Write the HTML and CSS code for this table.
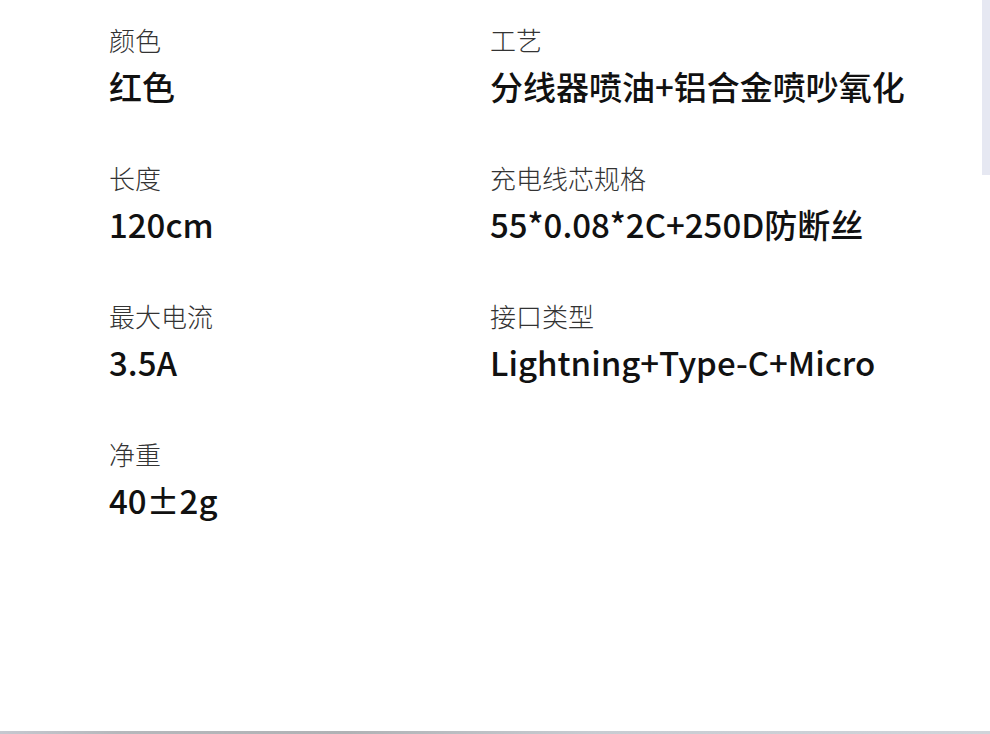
FILE: index.html
```html
<!DOCTYPE html>
<html lang="zh-CN">
<head>
<meta charset="utf-8">
<link rel="stylesheet" href="styles.css">
</head>
<body>
<div class="page">
  <div class="specs">
    <div class="item"><div class="label">颜色</div><div class="value">红色</div></div>
    <div class="item"><div class="label">工艺</div><div class="value">分线器喷油+铝合金喷吵氧化</div></div>
    <div class="item"><div class="label">长度</div><div class="value">120cm</div></div>
    <div class="item"><div class="label">充电线芯规格</div><div class="value">55*0.08*2C+250D防断丝</div></div>
    <div class="item"><div class="label">最大电流</div><div class="value">3.5A</div></div>
    <div class="item"><div class="label">接口类型</div><div class="value">Lightning+Type-C+Micro</div></div>
    <div class="item"><div class="label">净重</div><div class="value">40±2g</div></div>
  </div>
  <div class="scroll-thumb"></div>
  <div class="bottom-bar"></div>
</div>
</body>
</html>
```
FILE: styles.css
```css
html, body {
  margin: 0;
  padding: 0;
  background: #ffffff;
}
.page {
  position: relative;
  width: 990px;
  height: 734px;
  overflow: hidden;
  font-family: "Noto Sans CJK SC", "Noto Sans", sans-serif;
}
.specs {
  display: grid;
  grid-template-columns: 381px 480px;
  padding: 25px 0 0 109px;
}
.item {
  height: 138px;
  display: flex;
  flex-direction: column;
}
.label {
  font-size: 26px;
  line-height: 30px;
  font-weight: 300;
  color: #333333;
}
.value {
  margin-top: 11px;
  font-size: 33px;
  line-height: 40px;
  font-weight: 500;
  color: #111111;
  white-space: nowrap;
}
.scroll-thumb {
  position: absolute;
  right: 0;
  top: 0;
  width: 8px;
  height: 175px;
  background: #e6e8f2;
}
.bottom-bar {
  position: absolute;
  left: 0;
  bottom: 0;
  width: 100%;
  height: 3px;
  background: linear-gradient(90deg, #c6c8d0 0%, #b6b8bc 12%, #b0b2b5 35%, #c8ccd2 60%, #d0d4da 100%);
}
```
